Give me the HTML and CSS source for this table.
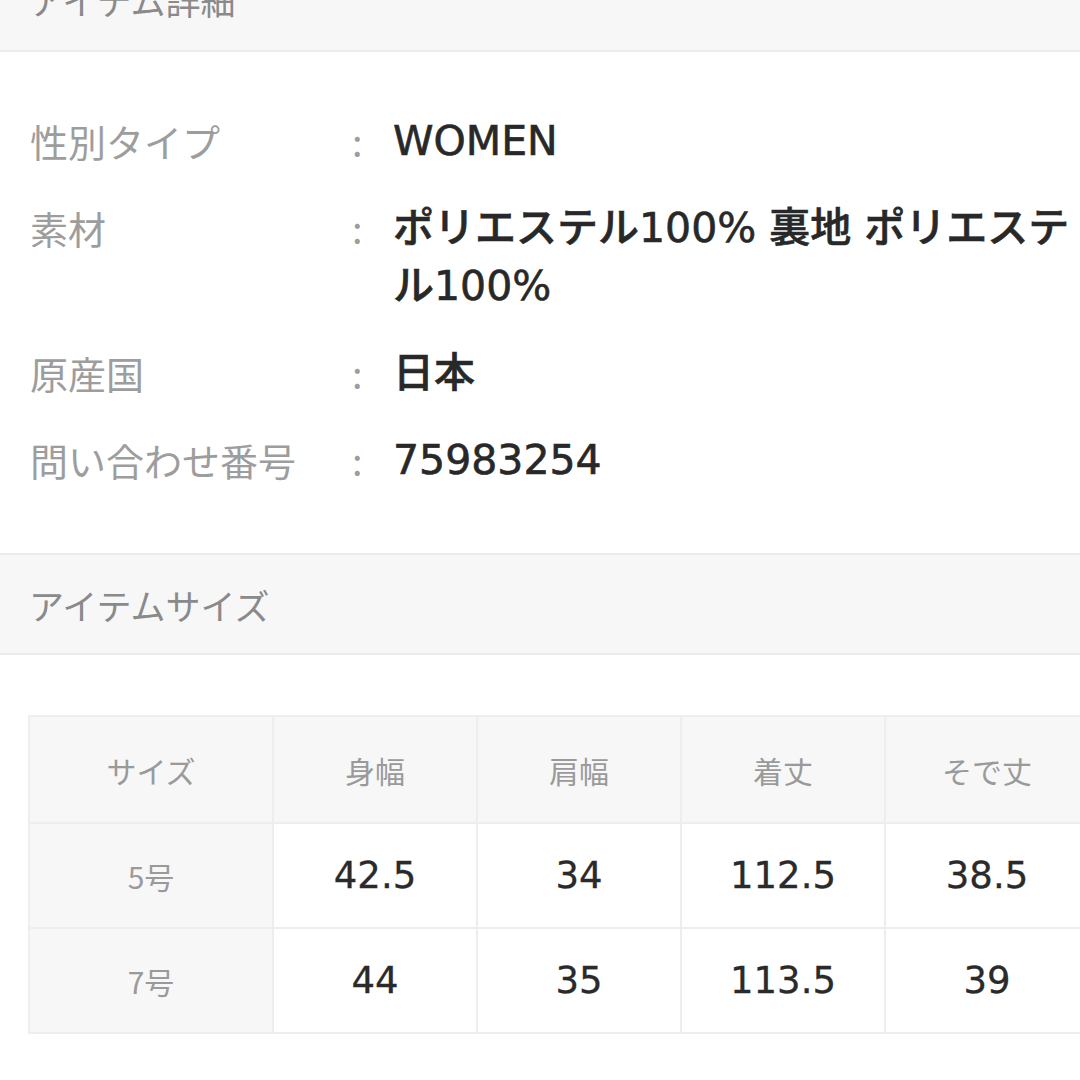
FILE: index.html
```html
<!DOCTYPE html>
<html lang="ja">
<head>
<meta charset="utf-8">
<title>アイテム詳細</title>
<link rel="stylesheet" href="styles.css">
</head>
<body>
<div class="page">
  <div class="section-head section-head--first">アイテム詳細</div>
  <div class="details">
    <div class="row">
      <div class="label">性別タイプ</div>
      <div class="colon">:</div>
      <div class="value">WOMEN</div>
    </div>
    <div class="row">
      <div class="label">素材</div>
      <div class="colon">:</div>
      <div class="value">ポリエステル100% 裏地 ポリエステル100%</div>
    </div>
    <div class="row">
      <div class="label">原産国</div>
      <div class="colon">:</div>
      <div class="value">日本</div>
    </div>
    <div class="row">
      <div class="label">問い合わせ番号</div>
      <div class="colon">:</div>
      <div class="value">75983254</div>
    </div>
  </div>
  <div class="section-head">アイテムサイズ</div>
  <div class="sizes">
    <table class="size-table">
      <colgroup>
        <col class="col-size">
        <col class="col-val">
        <col class="col-val">
        <col class="col-val">
        <col class="col-val">
      </colgroup>
      <thead>
        <tr>
          <th>サイズ</th>
          <th>身幅</th>
          <th>肩幅</th>
          <th>着丈</th>
          <th>そで丈</th>
        </tr>
      </thead>
      <tbody>
        <tr>
          <th>5号</th>
          <td>42.5</td>
          <td>34</td>
          <td>112.5</td>
          <td>38.5</td>
        </tr>
        <tr>
          <th>7号</th>
          <td>44</td>
          <td>35</td>
          <td>113.5</td>
          <td>39</td>
        </tr>
      </tbody>
    </table>
  </div>
</div>
</body>
</html>
```

FILE: styles.css
```css
html, body {
  margin: 0;
  padding: 0;
  background: #ffffff;
}

body {
  width: 1080px;
  height: 1080px;
  overflow: hidden;
  font-family: "Noto Sans CJK JP", sans-serif;
}

.page {
  margin-top: -48px;
}

.section-head {
  height: 98px;
  box-sizing: content-box;
  background: #f7f7f7;
  border-top: 2px solid #ececec;
  border-bottom: 2px solid #ececec;
  padding-left: 29px;
  display: flex;
  align-items: center;
  font-size: 35px;
  color: #8a8a8a;
  line-height: 1;
}

.section-head--first {
  border-top: none;
  padding-bottom: 4px;
  height: 94px;
}

.details {
  padding: 60px 0 64px 30px;
  display: flex;
  flex-direction: column;
  gap: 29px;
}

.row {
  display: grid;
  grid-template-columns: 318px 45px 1fr;
  line-height: 58px;
}

.label {
  font-size: 38px;
  color: #9d9d9d;
}

.colon {
  font-size: 38px;
  color: #9d9d9d;
  padding-left: 4px;
}

.value {
  font-family: "DejaVu Sans", "Noto Sans CJK JP", sans-serif;
  font-size: 41px;
  color: #282828;
  font-weight: 500;
  -webkit-text-stroke: 0.6px #282828;
}

.sizes {
  padding: 60px 0 0 28px;
}

.size-table {
  border-collapse: collapse;
  table-layout: fixed;
  width: 1060px;
}

.col-size {
  width: 244px;
}

.col-val {
  width: 204px;
}

.size-table th,
.size-table td {
  border: 2px solid #eeeeee;
  text-align: center;
  padding: 0;
}

.size-table thead th {
  height: 105px;
  background: #f7f7f7;
  font-size: 30px;
  font-weight: normal;
  color: #9a9a9a;
}

.size-table tbody th {
  height: 103px;
  background: #f7f7f7;
  font-size: 30px;
  font-weight: normal;
  color: #9a9a9a;
}

.size-table td {
  background: #ffffff;
  font-family: "DejaVu Sans", "Noto Sans CJK JP", sans-serif;
  font-size: 37px;
  color: #2a2a2a;
  -webkit-text-stroke: 0.3px #2a2a2a;
}
```
